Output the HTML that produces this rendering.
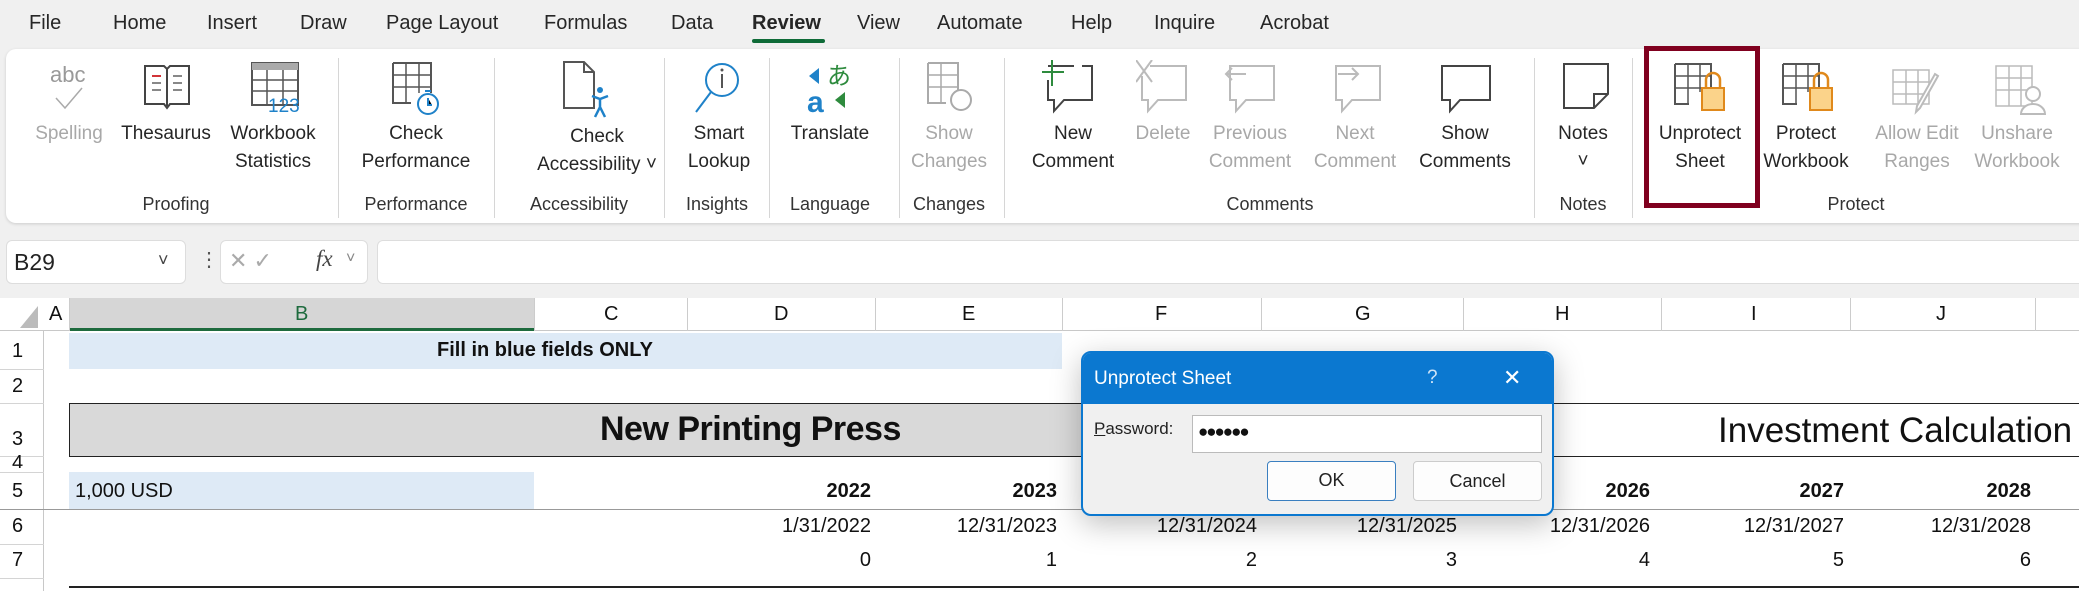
<!DOCTYPE html>
<html><head><meta charset="utf-8"><style>
*{margin:0;padding:0;box-sizing:border-box}
body{width:2079px;height:591px;overflow:hidden;background:#f0f0f0;font-family:"Liberation Sans",sans-serif;position:relative;color:#222}
.a{position:absolute;white-space:nowrap}
.tab{position:absolute;top:12px;font-size:20px;color:#262626}
.lbl{position:absolute;font-size:19px;text-align:center;line-height:28px;color:#262626;transform:translateX(-50%)}
.dis{color:#a8a8a8}
.grp{position:absolute;top:194px;font-size:18px;color:#333;transform:translateX(-50%)}
.sep{position:absolute;top:58px;width:1px;height:160px;background:#d6d6d6}
.ic{position:absolute;top:60px}
.cell{position:absolute;font-size:20px;color:#111}
.hl{position:absolute;left:0;height:1px;background:#d4d4d4}
</style></head><body>
<div class="tab" style="left:29px">File</div>
<div class="tab" style="left:113px">Home</div>
<div class="tab" style="left:207px">Insert</div>
<div class="tab" style="left:300px">Draw</div>
<div class="tab" style="left:386px">Page Layout</div>
<div class="tab" style="left:544px">Formulas</div>
<div class="tab" style="left:671px">Data</div>
<div class="tab" style="left:752px;font-weight:bold">Review</div>
<div class="a" style="left:752px;top:39px;width:73px;height:4px;background:#0f6b38;border-radius:2px"></div>
<div class="tab" style="left:857px">View</div>
<div class="tab" style="left:937px">Automate</div>
<div class="tab" style="left:1071px">Help</div>
<div class="tab" style="left:1154px">Inquire</div>
<div class="tab" style="left:1260px">Acrobat</div>

<div class="a" style="left:6px;top:49px;width:2090px;height:174px;background:#fff;border-radius:10px;box-shadow:0 1px 3px rgba(0,0,0,.15)"></div>
<div class="sep" style="left:338px"></div><div class="sep" style="left:494px"></div><div class="sep" style="left:664px"></div><div class="sep" style="left:769px"></div><div class="sep" style="left:899px"></div><div class="sep" style="left:1004px"></div><div class="sep" style="left:1534px"></div><div class="sep" style="left:1632px"></div>

<svg class="ic" style="left:48px" width="44" height="55"><text x="2" y="22" font-size="22" fill="#999" font-family="Liberation Sans">abc</text><path d="M8 38 L17 48 L34 28" stroke="#aaa" stroke-width="1.5" fill="none"/></svg>
<svg class="ic" style="left:142px" width="50" height="55"><path d="M3 6 H22 L25 9 L28 6 H47 V44 H28 L25 48 L22 44 H3Z M25 9 V46" stroke="#444" stroke-width="2" fill="#fff"/><path d="M10 16h9M10 23h9M10 30h9M31 16h9M31 23h9M31 30h9" stroke="#888" stroke-width="2"/><path d="M10 16h9" stroke="#d13438" stroke-width="2"/></svg>
<svg class="ic" style="left:250px" width="50" height="55"><rect x="2" y="3" width="46" height="42" fill="#fff" stroke="#555" stroke-width="2"/><rect x="2" y="3" width="46" height="7" fill="#aaa"/><path d="M2 20h46M2 31h46M17 10v35M33 10v35" stroke="#555" stroke-width="1.5"/><text x="18" y="52" font-size="19" fill="#1f82c9" font-family="Liberation Sans">123</text></svg>
<svg class="ic" style="left:390px" width="55" height="58"><path d="M3 3h38v30M3 3v40h18" stroke="#555" stroke-width="2" fill="#fff"/><path d="M3 15h38M3 27h38M16 3v40M29 3v30" stroke="#555" stroke-width="1.5"/><circle cx="38" cy="44" r="10" fill="#fff" stroke="#1f82c9" stroke-width="2"/><path d="M38 38v7h4M35 31h6" stroke="#1f82c9" stroke-width="2"/></svg>
<svg class="ic" style="left:560px" width="50" height="62"><path d="M4 2h20l10 10v36H4Z M24 2v10h10" stroke="#555" stroke-width="2" fill="#fff"/><circle cx="40" cy="30" r="3" fill="#1f82c9"/><path d="M32 36l8 3 8-3M40 39v8l-5 10M40 47l5 10" stroke="#1f82c9" stroke-width="2.5" fill="none"/></svg>
<svg class="ic" style="left:692px" width="50" height="60"><circle cx="30" cy="20" r="16" fill="#fff" stroke="#1f82c9" stroke-width="2"/><path d="M30 14v14" stroke="#555" stroke-width="2"/><circle cx="30" cy="10" r="1.5" fill="#555"/><path d="M19 32L4 52" stroke="#1f82c9" stroke-width="2"/></svg>
<svg class="ic" style="left:805px" width="50" height="58"><text x="2" y="52" font-size="30" font-weight="bold" fill="#1f82c9" font-family="Liberation Sans">a</text><text x="22" y="24" font-size="24" fill="#2e8b3e" font-family="Noto Sans CJK JP">あ</text><path d="M4 16l10-8v16z" fill="#1f82c9"/><path d="M40 48l-10-8 10-8z" fill="#2e8b3e"/></svg>
<svg class="ic" style="left:925px" width="50" height="58"><path d="M3 3h30v30M3 3v40h18" stroke="#aaa" stroke-width="2" fill="#fff"/><path d="M3 15h30M3 27h30M16 3v40" stroke="#aaa" stroke-width="1.5"/><circle cx="36" cy="40" r="10" fill="#fff" stroke="#aaa" stroke-width="2"/></svg>
<svg class="ic" style="left:1042px" width="60" height="58"><path d="M6 6h26M40 6h10v34H22l-10 11V40H6V20" stroke="#444" stroke-width="2" fill="#fff"/><path d="M10 0v26M0 12h22" stroke="#2e8b3e" stroke-width="2"/></svg>
<svg class="ic" style="left:1136px" width="60" height="58"><path d="M14 6h36v34H22l-10 11V40H6V16" stroke="#bbb" stroke-width="2" fill="#fff"/><path d="M0 0l16 22M16 0L0 22" stroke="#bbb" stroke-width="2"/></svg>
<svg class="ic" style="left:1224px" width="60" height="58"><path d="M6 6h44v34H22l-10 11V40H6Z" stroke="#bbb" stroke-width="2" fill="#fff"/><path d="M2 14h20M8 8l-6 6 6 6" stroke="#bbb" stroke-width="2" fill="none"/></svg>
<svg class="ic" style="left:1330px" width="60" height="58"><path d="M6 6h44v34H22l-10 11V40H6Z" stroke="#bbb" stroke-width="2" fill="#fff"/><path d="M8 14h20M22 8l6 6-6 6" stroke="#bbb" stroke-width="2" fill="none"/></svg>
<svg class="ic" style="left:1438px" width="60" height="58"><path d="M4 6h48v34H22l-10 11V40H4Z" stroke="#444" stroke-width="2" fill="#fff"/></svg>
<svg class="ic" style="left:1561px" width="50" height="58"><path d="M3 4h44v30L33 48H3Z M47 34H33v14" stroke="#444" stroke-width="2" fill="#fff"/></svg>
<svg class="ic" style="left:1672px" width="60" height="58"><path d="M3 4h36v28M3 4v40h14" stroke="#555" stroke-width="2" fill="#fff"/><path d="M3 16h36M3 28h36M16 4v40M28 4v28" stroke="#555" stroke-width="1.5"/><path d="M34 28v-8a7 7 0 0 1 14 0v8" stroke="#e0891b" stroke-width="2.5" fill="none"/><rect x="30" y="28" width="22" height="22" fill="#fbd38a" stroke="#e0891b" stroke-width="2"/></svg>
<svg class="ic" style="left:1780px" width="60" height="58"><path d="M3 4h36v28M3 4v40h14" stroke="#555" stroke-width="2" fill="#fff"/><path d="M3 16h36M3 28h36M16 4v40M28 4v28" stroke="#555" stroke-width="1.5"/><path d="M34 28v-8a7 7 0 0 1 14 0v8" stroke="#e0891b" stroke-width="2.5" fill="none"/><rect x="30" y="28" width="22" height="22" fill="#fbd38a" stroke="#e0891b" stroke-width="2"/></svg>
<svg class="ic" style="left:1890px" width="60" height="58"><path d="M3 10h36v34H3Z M3 22h36M3 34h36M16 10v34M28 10v34" stroke="#bbb" stroke-width="1.5" fill="#fff"/><path d="M48 16L30 48l-4 4 1-6 18-32z" stroke="#bbb" stroke-width="2" fill="#fff"/></svg>
<svg class="ic" style="left:1993px" width="60" height="58"><path d="M3 6h36v40H3Z M3 18h36M3 30h36M16 6v40M28 6v40" stroke="#bbb" stroke-width="1.5" fill="#fff"/><circle cx="40" cy="34" r="7" fill="#fff" stroke="#bbb" stroke-width="2"/><path d="M28 54a12 10 0 0 1 24 0z" fill="#fff" stroke="#bbb" stroke-width="2"/></svg>

<div class="lbl dis" style="left:69px;top:120px">Spelling</div>
<div class="lbl" style="left:166px;top:120px">Thesaurus</div>
<div class="lbl" style="left:273px;top:120px">Workbook<br>Statistics</div>
<div class="lbl" style="left:416px;top:120px">Check<br>Performance</div>
<div class="lbl" style="left:597px;top:123px">Check<br>Accessibility ˅</div>
<div class="lbl" style="left:719px;top:120px">Smart<br>Lookup</div>
<div class="lbl" style="left:830px;top:120px">Translate</div>
<div class="lbl dis" style="left:949px;top:120px">Show<br>Changes</div>
<div class="lbl" style="left:1073px;top:120px">New<br>Comment</div>
<div class="lbl dis" style="left:1163px;top:120px">Delete</div>
<div class="lbl dis" style="left:1250px;top:120px">Previous<br>Comment</div>
<div class="lbl dis" style="left:1355px;top:120px">Next<br>Comment</div>
<div class="lbl" style="left:1465px;top:120px">Show<br>Comments</div>
<div class="lbl" style="left:1583px;top:120px">Notes<br>˅</div>
<div class="lbl" style="left:1700px;top:120px">Unprotect<br>Sheet</div>
<div class="lbl" style="left:1806px;top:120px">Protect<br>Workbook</div>
<div class="lbl dis" style="left:1917px;top:120px">Allow Edit<br>Ranges</div>
<div class="lbl dis" style="left:2017px;top:120px">Unshare<br>Workbook</div>
<div class="grp" style="left:176px">Proofing</div>
<div class="grp" style="left:416px">Performance</div>
<div class="grp" style="left:579px">Accessibility</div>
<div class="grp" style="left:717px">Insights</div>
<div class="grp" style="left:830px">Language</div>
<div class="grp" style="left:949px">Changes</div>
<div class="grp" style="left:1270px">Comments</div>
<div class="grp" style="left:1583px">Notes</div>
<div class="grp" style="left:1856px">Protect</div>
<div class="a" style="left:1644px;top:46px;width:116px;height:162px;border:5px solid #80001f"></div>

<div class="a" style="left:6px;top:240px;width:180px;height:44px;background:#fff;border:1px solid #ddd;border-radius:6px"></div>
<div class="a" style="left:14px;top:249px;font-size:23px;color:#222">B29</div>
<div class="a" style="left:158px;top:250px;font-size:18px;color:#444">˅</div>
<div class="a" style="left:199px;top:247px;font-size:20px;color:#555">⋮</div>
<div class="a" style="left:220px;top:240px;width:148px;height:44px;background:#fff;border:1px solid #ddd;border-radius:6px"></div>
<div class="a" style="left:229px;top:248px;font-size:22px;color:#aaa">✕ ✓</div>
<div class="a" style="left:316px;top:246px;font-size:23px;font-style:italic;font-family:'Liberation Serif',serif;color:#444">fx</div>
<div class="a" style="left:346px;top:250px;font-size:16px;color:#888">˅</div>
<div class="a" style="left:377px;top:240px;width:1710px;height:44px;background:#fff;border:1px solid #ddd;border-radius:6px"></div>

<div class="a" style="left:0;top:298px;width:2079px;height:293px;background:#fff"></div>
<div class="a" style="left:0;top:298px;width:2079px;height:33px;background:#fff;border-bottom:1px solid #c8c8c8"></div>
<div class="a" style="left:69px;top:298px;width:465px;height:33px;background:#d6d6d6;border-bottom:3px solid #1e6b3e"></div>
<svg class="a" style="left:20px;top:306px" width="20" height="24"><path d="M18 0V22H0Z" fill="#bbb"/></svg>
<div class="a" style="left:0;top:331px;width:44px;height:260px;border-right:1px solid #c8c8c8"></div>
<div class="cell" style="left:49px;top:303px">A</div>
<div class="cell" style="left:295px;top:303px;color:#1e6b3e">B</div>
<div class="cell" style="left:604px;top:303px">C</div>
<div class="cell" style="left:774px;top:303px">D</div>
<div class="cell" style="left:962px;top:303px">E</div>
<div class="cell" style="left:1155px;top:303px">F</div>
<div class="cell" style="left:1355px;top:303px">G</div>
<div class="cell" style="left:1555px;top:303px">H</div>
<div class="cell" style="left:1751px;top:303px">I</div>
<div class="cell" style="left:1936px;top:303px">J</div>
<div class="a" style="left:69px;top:298px;width:1px;height:33px;background:#ccc"></div>
<div class="a" style="left:534px;top:298px;width:1px;height:33px;background:#ccc"></div>
<div class="a" style="left:687px;top:298px;width:1px;height:33px;background:#ccc"></div>
<div class="a" style="left:875px;top:298px;width:1px;height:33px;background:#ccc"></div>
<div class="a" style="left:1062px;top:298px;width:1px;height:33px;background:#ccc"></div>
<div class="a" style="left:1261px;top:298px;width:1px;height:33px;background:#ccc"></div>
<div class="a" style="left:1463px;top:298px;width:1px;height:33px;background:#ccc"></div>
<div class="a" style="left:1661px;top:298px;width:1px;height:33px;background:#ccc"></div>
<div class="a" style="left:1850px;top:298px;width:1px;height:33px;background:#ccc"></div>
<div class="a" style="left:2035px;top:298px;width:1px;height:33px;background:#ccc"></div>
<div class="hl" style="top:369px;width:44px"></div><div class="hl" style="top:403px;width:44px"></div><div class="hl" style="top:456px;width:44px"></div><div class="hl" style="top:472px;width:44px"></div><div class="hl" style="top:509px;width:44px"></div><div class="hl" style="top:544px;width:44px"></div><div class="hl" style="top:578px;width:44px"></div>
<div class="cell" style="left:12px;top:340px">1</div>
<div class="cell" style="left:12px;top:375px">2</div>
<div class="cell" style="left:12px;top:428px">3</div>
<div class="cell" style="left:12px;top:452px;height:16px;overflow:hidden">4</div>
<div class="cell" style="left:12px;top:480px">5</div>
<div class="cell" style="left:12px;top:515px">6</div>
<div class="cell" style="left:12px;top:549px">7</div>
<div class="a" style="left:69px;top:333px;width:993px;height:36px;background:#deeaf6"></div>
<div class="cell" style="left:437px;top:339px;font-weight:bold">Fill in blue fields ONLY</div>
<div class="a" style="left:69px;top:403px;width:2010px;height:54px;border-top:1.5px solid #222;border-bottom:1.5px solid #222"></div>
<div class="a" style="left:69px;top:403px;width:1100px;height:54px;background:#d9d9d9;border:1.5px solid #222"></div>
<div class="cell" style="left:600px;top:410px;font-size:34px;font-weight:bold;letter-spacing:-0.5px">New Printing Press</div>
<div class="cell" style="left:1718px;top:411px;font-size:35px">Investment Calculation</div>
<div class="a" style="left:69px;top:472px;width:465px;height:37px;background:#deeaf6"></div>
<div class="cell" style="left:75px;top:480px">1,000 USD</div>
<div class="a" style="left:0;top:509px;width:2079px;height:1px;background:#999"></div>
<div class="a" style="left:69px;top:586px;width:2010px;height:2px;background:#222"></div>
<div class="cell" style="left:0;top:480px;width:871px;text-align:right;font-weight:bold">2022</div>
<div class="cell" style="left:0;top:480px;width:1057px;text-align:right;font-weight:bold">2023</div>
<div class="cell" style="left:0;top:480px;width:1650px;text-align:right;font-weight:bold">2026</div>
<div class="cell" style="left:0;top:480px;width:1844px;text-align:right;font-weight:bold">2027</div>
<div class="cell" style="left:0;top:480px;width:2031px;text-align:right;font-weight:bold">2028</div>
<div class="cell" style="left:0;top:515px;width:871px;text-align:right">1/31/2022</div>
<div class="cell" style="left:0;top:515px;width:1057px;text-align:right">12/31/2023</div>
<div class="cell" style="left:0;top:515px;width:1257px;text-align:right">12/31/2024</div>
<div class="cell" style="left:0;top:515px;width:1457px;text-align:right">12/31/2025</div>
<div class="cell" style="left:0;top:515px;width:1650px;text-align:right">12/31/2026</div>
<div class="cell" style="left:0;top:515px;width:1844px;text-align:right">12/31/2027</div>
<div class="cell" style="left:0;top:515px;width:2031px;text-align:right">12/31/2028</div>
<div class="cell" style="left:0;top:549px;width:871px;text-align:right">0</div>
<div class="cell" style="left:0;top:549px;width:1057px;text-align:right">1</div>
<div class="cell" style="left:0;top:549px;width:1257px;text-align:right">2</div>
<div class="cell" style="left:0;top:549px;width:1457px;text-align:right">3</div>
<div class="cell" style="left:0;top:549px;width:1650px;text-align:right">4</div>
<div class="cell" style="left:0;top:549px;width:1844px;text-align:right">5</div>
<div class="cell" style="left:0;top:549px;width:2031px;text-align:right">6</div>

<div class="a" style="left:1081px;top:351px;width:473px;height:165px;background:#f0f0f0;border:2px solid #0b78d0;border-radius:10px;box-shadow:0 8px 30px rgba(0,0,0,.25);overflow:hidden">
 <div style="height:51px;background:#0b78d0;position:relative">
  <div class="a" style="left:11px;top:15px;font-size:19px;color:#fff">Unprotect Sheet</div>
  <div class="a" style="left:344px;top:14px;font-size:19px;color:#cfe4f7">?</div>
  <div class="a" style="left:420px;top:12px;font-size:22px;color:#fff">✕</div>
 </div>
 <div class="a" style="left:11px;top:66px;font-size:17px;color:#222"><u>P</u>assword:</div>
 <div class="a" style="left:109px;top:62px;width:350px;height:38px;background:#fff;border:1px solid #bbb"></div>
 <div class="a" style="left:115px;top:69px;font-size:17px;color:#111;letter-spacing:-2px">●●●●●●</div>
 <div class="a" style="left:184px;top:108px;width:129px;height:40px;background:#fdfdfd;border:1.5px solid #3a7fc0;border-radius:4px;text-align:center;line-height:37px;font-size:18px">OK</div>
 <div class="a" style="left:330px;top:108px;width:129px;height:40px;background:#fdfdfd;border:1px solid #ccc;border-radius:4px;text-align:center;line-height:38px;font-size:18px">Cancel</div>
</div>
</body></html>
